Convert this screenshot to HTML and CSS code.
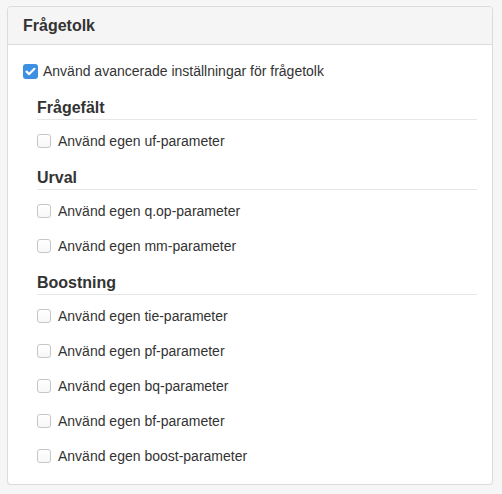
FILE: index.html
```html
<!DOCTYPE html>
<html>
    <head>
        <meta name="viewport" content="width=device-width, initial-scale=1.0">
        <link rel="stylesheet" href="styles.css">
    </head>
    <body>
        <div class="panel">
            <div class="panel-heading">
                <p class="panel-title">Frågetolk</p>
            </div>
            <div class="panel-body">
                <label class="check">
                    <span class="box checked">
                        <svg width="15" height="15" viewBox="0 0 15 15"><path d="M3.6 7.6 L6.2 10.1 L11.4 4.8" fill="none" stroke="#fff" stroke-width="2.2" stroke-linecap="round" stroke-linejoin="round"/></svg>
                    </span>
                    Använd avancerade inställningar för frågetolk
                </label>

                <div class="section">
                    <p class="section-title">Frågefält</p>
                    <label class="check"><span class="box"></span>Använd egen uf-parameter</label>
                </div>

                <div class="section">
                    <p class="section-title">Urval</p>
                    <label class="check"><span class="box"></span>Använd egen q.op-parameter</label>
                    <label class="check"><span class="box"></span>Använd egen mm-parameter</label>
                </div>

                <div class="section">
                    <p class="section-title">Boostning</p>
                    <label class="check"><span class="box"></span>Använd egen tie-parameter</label>
                    <label class="check"><span class="box"></span>Använd egen pf-parameter</label>
                    <label class="check"><span class="box"></span>Använd egen bq-parameter</label>
                    <label class="check"><span class="box"></span>Använd egen bf-parameter</label>
                    <label class="check"><span class="box"></span>Använd egen boost-parameter</label>
                </div>
            </div>
        </div>
    </body>
</html>
```

FILE: styles.css
```css
body{
    margin: 0;
    padding: 6px 8px 0 7px;
    background: #f6f6f6;
    font-family: "Liberation Sans", Arial, sans-serif;
    font-size: 14px;
    color: #333;
}
        .panel{
            width: 484px;
            background: #fff;
            border: 1px solid #dcdcdc;
            border-radius: 4px;
            box-shadow: 0 1px 1px rgba(0, 0, 0, 0.06);
        }
        .panel-heading{
            background: #f5f5f5;
            border-bottom: 1px solid #dcdcdc;
            border-radius: 4px 4px 0 0;
            padding: 10px 15px;
        }
        .panel-title{
            margin: 0;
            font-size: 16px;
            font-weight: bold;
            line-height: 17px;
        }
        .panel-body{
            padding: 16px 15px 18px 15px;
        }

        .check{
            display: flex;
            align-items: center;
            gap: 6px;
            line-height: 20px;
            height: 20px;
            cursor: pointer;
        }
        .box{
            width: 12px;
            height: 12px;
            border: 1px solid #c6c6c6;
            border-radius: 3px;
            background: linear-gradient(#fff, #f7f7f7);
            display: flex;
            align-items: center;
            justify-content: center;
            margin-right: 1px;
        }
        .box.checked{
            width: 15px;
            height: 15px;
            border: none;
            background: #3d8fe4;
            margin-right: -1px;
        }
        .box svg{
            display: block;
        }

        .section{
            margin: 17px 0 0 14px;
        }
        .section .check{
            margin-top: 15px;
        }
        .section-title{
            margin: 0 0 -4px 0;
            font-size: 16px;
            font-weight: bold;
            line-height: 20px;
            padding-bottom: 1px;
            border-bottom: 1px solid #e6e6e6;
        }
```
